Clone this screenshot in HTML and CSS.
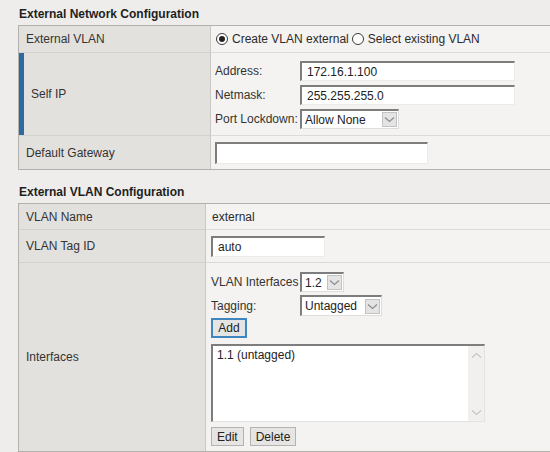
FILE: index.html
```html
<!DOCTYPE html>
<html>
<head>
<meta charset="utf-8">
<link rel="stylesheet" href="styles.css">
</head>
<body>
<div class="page">
  <h2 class="sec sec-first">External Network Configuration</h2>
  <div class="tbl tbl-net">
    <div class="lbl">External VLAN</div>
    <div class="val val-radio">
      <span class="radio checked"></span><span class="rtext">Create VLAN external</span>
      <span class="radio"></span><span class="rtext">Select existing VLAN</span>
    </div>

    <div class="lbl lbl-self"><span class="bar"></span><span>Self IP</span></div>
    <div class="val val-self">
      <div class="form-grid">
        <span class="flbl">Address:</span>
        <span class="input input-ip">172.16.1.100</span>
        <span class="flbl">Netmask:</span>
        <span class="input input-ip">255.255.255.0</span>
        <span class="flbl">Port Lockdown:</span>
        <span class="select select-lock"><span class="seltext">Allow None</span><span class="selbtn"><svg width="11" height="7" viewBox="0 0 11 7"><polyline points="1,1.5 5.5,5.5 10,1.5" fill="none" stroke="#8a8a8a" stroke-width="1.1"/></svg></span></span>
      </div>
    </div>

    <div class="lbl lbl-last">Default Gateway</div>
    <div class="val val-last val-gw">
      <span class="input input-gw"></span>
    </div>
  </div>

  <h2 class="sec sec-second">External VLAN Configuration</h2>
  <div class="tbl tbl-vlan">
    <div class="lbl">VLAN Name</div>
    <div class="val val-name">external</div>

    <div class="lbl">VLAN Tag ID</div>
    <div class="val val-tag"><span class="input input-tag">auto</span></div>

    <div class="lbl lbl-last">Interfaces</div>
    <div class="val val-last val-if">
      <div class="if-row">
        <span class="flbl2">VLAN Interfaces</span>
        <span class="select select-if"><span class="seltext">1.2</span><span class="selbtn"><svg width="11" height="7" viewBox="0 0 11 7"><polyline points="1,1.5 5.5,5.5 10,1.5" fill="none" stroke="#8a8a8a" stroke-width="1.1"/></svg></span></span>
      </div>
      <div class="if-row if-row2">
        <span class="flbl2">Tagging:</span>
        <span class="select select-tag"><span class="seltext">Untagged</span><span class="selbtn"><svg width="11" height="7" viewBox="0 0 11 7"><polyline points="1,1.5 5.5,5.5 10,1.5" fill="none" stroke="#8a8a8a" stroke-width="1.1"/></svg></span></span>
      </div>
      <div class="btn-row btn-row-add"><span class="btn btn-add">Add</span></div>
      <div class="listbox">
        <div class="list-items">1.1 (untagged)</div>
        <div class="scroll">
          <svg width="11" height="7" viewBox="0 0 11 7"><polyline points="1,5.5 5.5,1.5 10,5.5" fill="none" stroke="#c4c4c4" stroke-width="1.1"/></svg>
          <svg width="11" height="7" viewBox="0 0 11 7"><polyline points="1,1.5 5.5,5.5 10,1.5" fill="none" stroke="#c4c4c4" stroke-width="1.1"/></svg>
        </div>
      </div>
      <div class="btn-row btn-row-edit">
        <span class="btn">Edit</span>
        <span class="btn">Delete</span>
      </div>
    </div>
  </div>
</div>
</body>
</html>
```

FILE: styles.css
```css
html, body {
  margin: 0;
  padding: 0;
}
body {
  background: #eeedeb;
  font-family: "Liberation Sans", Arial, sans-serif;
  font-size: 12px;
  color: #2b2b2b;
  overflow: hidden;
  width: 550px;
  height: 452px;
}
.page {
  width: 550px;
}
.sec {
  margin: 0;
  font-size: 12px;
  font-weight: bold;
  line-height: 14px;
  color: #1e1e1e;
  padding-left: 19px;
  padding-bottom: 4px;
}
.sec-first { padding-top: 7px; }
.sec-second { padding-top: 15px; }

.tbl {
  margin-left: 18px;
  width: 532px;
  box-sizing: border-box;
  display: grid;
  border: 1px solid #b3b1ae;
  border-right: none;
  background: #f4f3f1;
}
.tbl-net { grid-template-columns: 192px 1fr; grid-template-rows: 27px 83px 33px; }
.tbl-vlan { grid-template-columns: 187px 1fr; grid-template-rows: 26px 33px 188px; }

.lbl {
  background: #e3e1de;
  border-right: 1px solid #c9c7c4;
  border-bottom: 1px solid #d3d1ce;
  display: flex;
  align-items: center;
  padding-left: 7px;
  color: #333;
}
.val {
  border-bottom: 1px solid #dcdad7;
  display: flex;
  align-items: center;
  padding-left: 5px;
}
.lbl-last, .val-last { border-bottom: none; }

.lbl-self {
  padding-left: 0;
  align-items: stretch;
}
.lbl-self .bar {
  width: 5px;
  background: #2d6aa1;
  margin-right: 7px;
}
.lbl-self span:last-child {
  display: flex;
  align-items: center;
}

.val-radio { padding-left: 5px; }
.radio {
  width: 10px;
  height: 10px;
  border: 1px solid #3a3a3a;
  border-radius: 50%;
  background: #fff;
  position: relative;
  margin-right: 4px;
  flex: none;
}
.radio.checked::after {
  content: "";
  position: absolute;
  left: 2px;
  top: 2px;
  width: 6px;
  height: 6px;
  border-radius: 50%;
  background: #222;
}
.rtext { margin-right: 3px; }

.val-self { padding-left: 4px; align-items: flex-start; }
.form-grid {
  display: grid;
  grid-template-columns: 85px auto;
  grid-auto-rows: 20px;
  row-gap: 4px;
  align-items: center;
  padding-top: 8px;
}
.flbl { color: #333; }

.input {
  box-sizing: border-box;
  display: inline-flex;
  align-items: center;
  background: #fff;
  border-top: 2px solid #7d7d7d;
  border-left: 2px solid #7d7d7d;
  border-right: 1px solid #ecebea;
  border-bottom: 1px solid #ecebea;
  padding-left: 5px;
  color: #222;
}
.input-ip { width: 215px; height: 20px; }
.input-gw { width: 213px; height: 22px; }
.val-gw { padding-left: 4px; }
.input-tag { width: 114px; height: 21px; }

.select {
  box-sizing: border-box;
  display: inline-flex;
  align-items: center;
  justify-content: space-between;
  background: #fff;
  border-top: 2px solid #7d7d7d;
  border-left: 2px solid #7d7d7d;
  border-right: 1px solid #dedddb;
  border-bottom: 1px solid #dedddb;
  height: 20px;
  padding-left: 3px;
  padding-right: 1px;
  color: #222;
}
.selbtn {
  width: 15px;
  height: 15px;
  box-sizing: border-box;
  background: #e4e4e4;
  border: 1px solid #c2c2c2;
  display: flex;
  align-items: center;
  justify-content: center;
}
.select-lock { width: 99px; }
.select-if { width: 44px; height: 20px; }
.select-tag { width: 82px; height: 21px; }

.val-name { padding-left: 6px; }
.val-tag { padding-left: 5px; }

.val-if {
  flex-direction: column;
  align-items: flex-start;
  padding-left: 5px;
  padding-top: 9px;
}
.if-row {
  display: flex;
  align-items: center;
  height: 20px;
}
.if-row2 { margin-top: 3px; height: 21px; }
.flbl2 { width: 89px; color: #333; }

.btn-row { display: flex; gap: 6px; }
.btn-row-add { margin-top: 2px; }
.btn-row-edit { margin-top: 5px; }
.btn {
  box-sizing: border-box;
  display: inline-flex;
  align-items: center;
  justify-content: center;
  height: 19px;
  padding: 0 5px;
  background: #e6e5e3;
  border: 1px solid #b4b3b1;
  color: #222;
}
.btn-add {
  height: 20px;
  width: 36px;
  border: 2px solid #3d86c0;
  background: #e4e4e4;
}

.listbox {
  margin-top: 6px;
  box-sizing: border-box;
  width: 274px;
  height: 78px;
  display: flex;
  background: #fff;
  border-top: 2px solid #7d7d7d;
  border-left: 2px solid #7d7d7d;
  border-right: 1px solid #e4e3e1;
  border-bottom: 1px solid #e4e3e1;
}
.list-items {
  flex: 1;
  padding: 2px 0 0 4px;
  color: #222;
}
.scroll {
  width: 16px;
  background: #f1f0ef;
  display: flex;
  flex-direction: column;
  justify-content: space-between;
  align-items: center;
  padding: 6px 0 5px;
  box-sizing: border-box;
}
```
